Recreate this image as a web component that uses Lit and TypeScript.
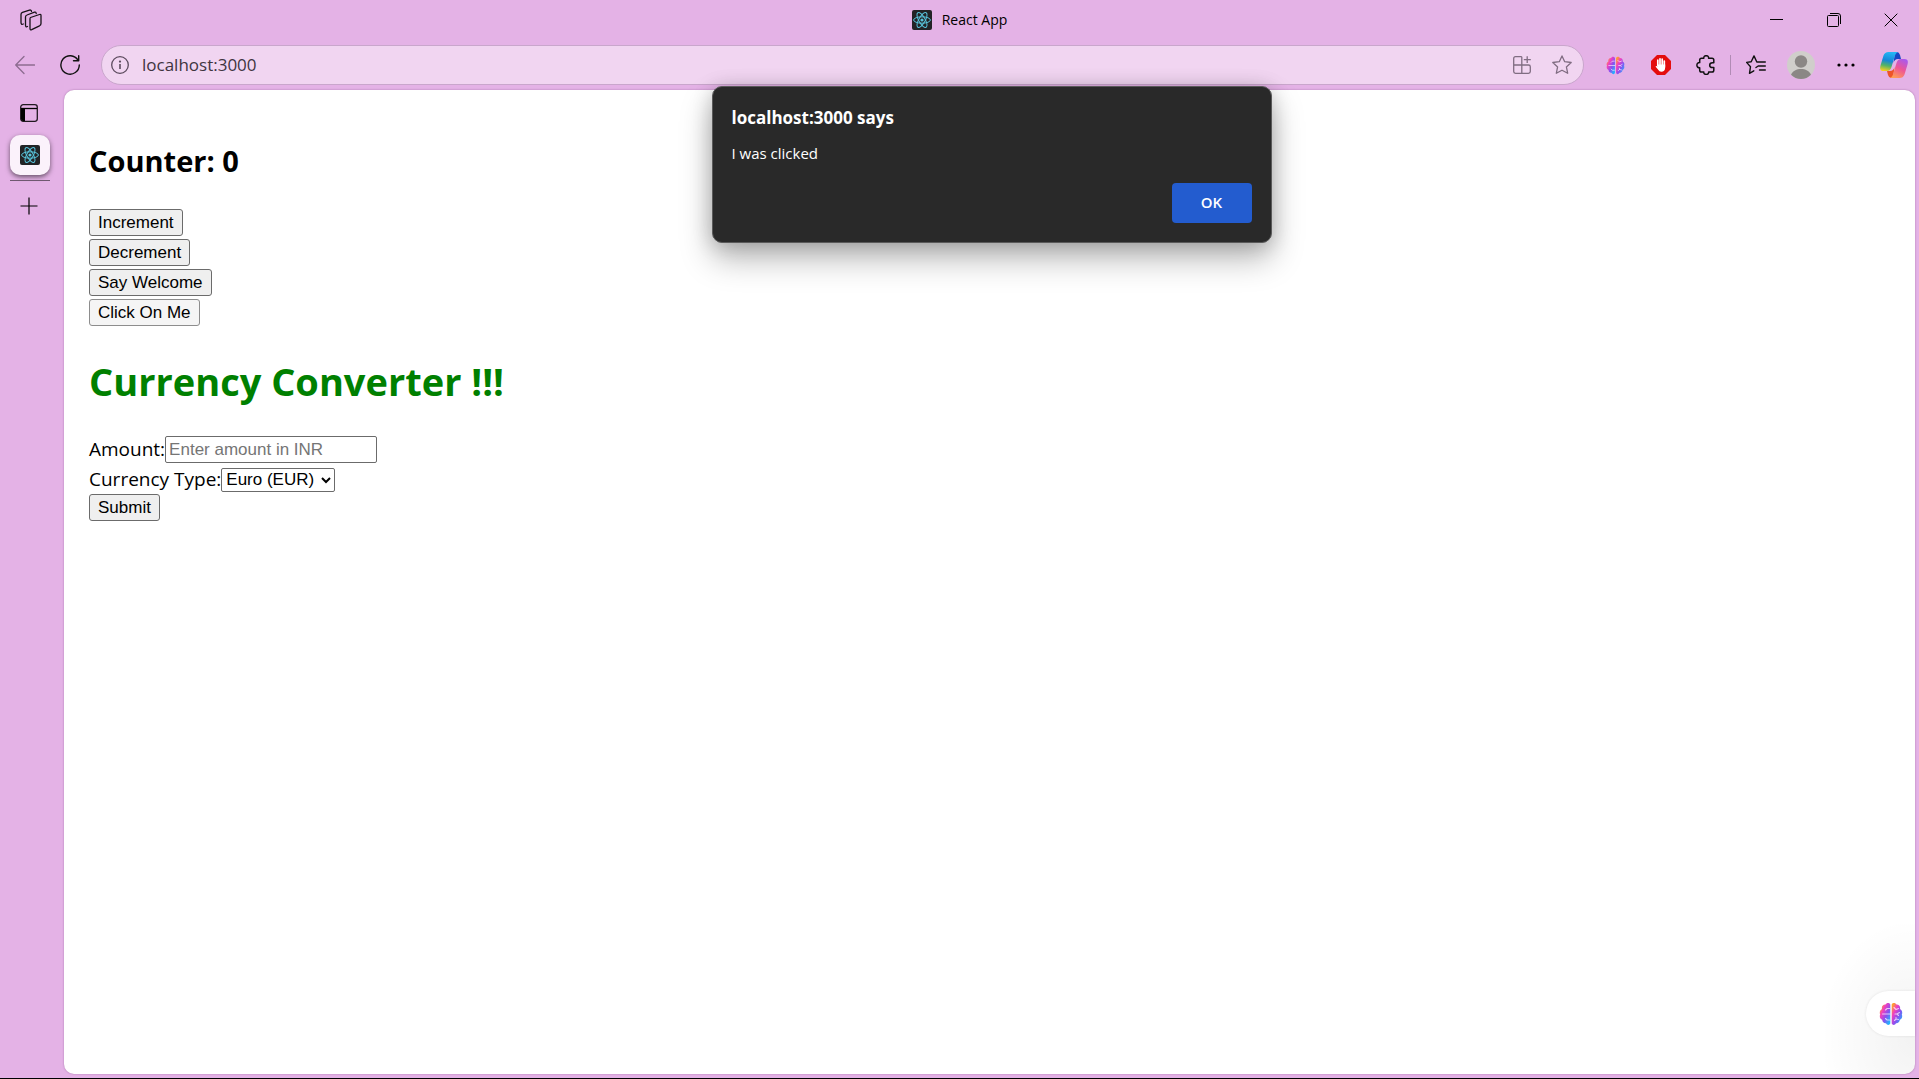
import { LitElement, html, svg, css } from "lit";
import { customElement, state } from "lit/decorators.js";

const reactLogo = html`<svg viewBox="0 0 20 20" width="20" height="20" aria-hidden="true">
  <rect width="20" height="20" rx="2" fill="#222326" />
  <g fill="none" stroke="#58c4dc" stroke-width="1">
    <ellipse cx="10" cy="10" rx="8.4" ry="3.2" />
    <ellipse cx="10" cy="10" rx="8.4" ry="3.2" transform="rotate(60 10 10)" />
    <ellipse cx="10" cy="10" rx="8.4" ry="3.2" transform="rotate(120 10 10)" />
  </g>
  <circle cx="10" cy="10" r="1.6" fill="#58c4dc" />
</svg>`;

const brain = (id: string, size: number) => html`<svg viewBox="0 0 24 24" width=${size} height=${size} aria-hidden="true">
  <defs>
    <linearGradient id=${id} x1="0" y1="0" x2="1" y2="1">
      <stop offset=".1" stop-color="#ffa02e" />
      <stop offset=".33" stop-color="#f13fc0" />
      <stop offset=".6" stop-color="#8a50f0" />
      <stop offset=".9" stop-color="#20b4ff" />
    </linearGradient>
  </defs>
  ${svg`<g fill=${`url(#${id})`}>
    <path d="M11.3 2.4C10.3.4 7.300.6 6.500 2.600 3.900 2.500 2.300 4.800 3 7 1 8 .2 10.500 1.200 12.400.2 14.500 1.200 17 3.200 17.800 3.300 20.300 5.300 21.600 7 21.300 8 23.500 10.600 23.500 11.300 21.600Z" />
    <path d="M12.700 2.400C13.700.4 16.700.6 17.500 2.600 20.100 2.500 21.700 4.800 21 7 23 8 23.800 10.500 22.800 12.400 23.800 14.500 22.800 17 20.800 17.800 20.700 20.300 18.700 21.600 17 21.300 16 23.500 13.400 23.500 12.700 21.600Z" />
  </g>`}
  <g fill="none" stroke="#fff" stroke-opacity=".7" stroke-width="1.100" stroke-linecap="round">
    <path d="M10.500 6.500H8L6.500 8M3.500 12H11M10.500 18H8L6.500 16.500M15 5.500L17 7.500 19.500 6.500M16 12H18L20.500 10.500M18 12L19.500 13.500M15.500 18.500L17 17 19.500 17.500M17 17V15.500" />
  </g>
</svg>`;

const line = (d: string, size = 20, width = 1.3) => html`<svg
  viewBox="0 0 20 20" width=${size} height=${size} fill="none" stroke="currentColor"
  stroke-width=${width} stroke-linecap="round" stroke-linejoin="round" aria-hidden="true"
><path d=${d} /></svg>`;

const star = "M10 .9L12.700 6.700 19.200 7.500 14.400 11.900 15.700 18.300 10 15.200 4.300 18.300 5.600 11.900.8 7.500 7.300 6.700Z";

@customElement("app-root")
export class AppRoot extends LitElement {
  @state() private count = 0;
  @state() private message = "I was clicked";

  static styles = css`
    :host {
      display: flex;
      flex-direction: column;
      min-height: 100vh;
      box-sizing: border-box;
      background: #e4b2e6;
      border-bottom: 1px solid #000;
      font-family: "Segoe UI", "Open Sans", sans-serif;
      color: #000;
    }
    * { box-sizing: border-box; }
    svg { display: block; flex: none; }
    .icon-button {
      display: flex;
      align-items: center;
      justify-content: center;
      width: 45px;
      height: 40px;
      padding: 0;
      border: 0;
      background: none;
      color: #111;
    }
    .titlebar {
      display: grid;
      grid-template-columns: 1fr auto 1fr;
      align-items: center;
      height: 40px;
    }
    .workspaces { margin-left: 8px; }
    .window-title {
      display: flex;
      align-items: center;
      gap: 10px;
      font-size: 14px;
      line-height: 20px;
    }
    .window-controls { display: flex; justify-content: flex-end; }
    .window-controls .icon-button { width: 57px; }
    .toolbar {
      display: flex;
      align-items: center;
      height: 50px;
      padding: 0 3px 0 2px;
    }
    .muted { color: #8d6c90; }
    .address {
      display: flex;
      flex: 1;
      align-items: center;
      height: 40px;
      margin: 0 9px;
      padding: 0 11px 0 8px;
      border: 1px solid #c9a6cc;
      border-radius: 20px;
      background: #f1d5f1;
      color: #5c4b5e;
    }
    .url {
      flex: 1;
      min-width: 0;
      margin-left: 12px;
      padding: 0;
      border: 0;
      outline: 0;
      background: none;
      color: #40343f;
      font: 17px/24px "Segoe UI", "Open Sans", sans-serif;
    }
    .address .icon-button { width: 40px; height: 36px; color: #806d82; }
    .address .info { width: 20px; color: #5c4b5e; }
    .address .favourite { width: 20px; margin-left: 10px; }
    .separator { width: 1px; height: 20px; margin: 0 2px; background: #b18bb5; }
    .copilot { margin-left: 3px; }
    .workspace { position: relative; display: flex; flex: 1; }
    .sidebar {
      display: flex;
      flex-direction: column;
      align-items: center;
      width: 64px;
      padding: 3px 6px 0 0;
    }
    .tab-menu { height: 40px; }
    .tab {
      display: flex;
      align-items: center;
      justify-content: center;
      width: 40px;
      height: 40px;
      margin: 2px 0 5px 2px;
      padding: 0;
      border: 0;
      border-radius: 10px;
      background: #fbf2fb;
      box-shadow: 0 2px 5px #0000008c;
    }
    .rule { width: 40px; height: 1px; margin: 0 0 5px 2px; background: #6f5870; }
    .stage { position: relative; display: flex; flex: 1; padding: 0 4px 4px 0; }
    .page {
      flex: 1;
      padding: 52px 25px 25px;
      border-radius: 10px;
      background: #fff;
      box-shadow: 0 0 2px #7c4b8099;
      font-size: 19px;
      line-height: 27px;
    }
    .counter { margin: 0 0 29px; font-size: 29px; line-height: 38px; font-weight: 700; }
    .actions { display: flex; flex-direction: column; align-items: flex-start; gap: 3px; }
    .page-button {
      height: 27px;
      padding: 0 8px;
      border: 1px solid #6b6b6b;
      border-radius: 3px;
      background: #efefef;
      color: #000;
      font: 17px/20px "Liberation Sans", Arial, sans-serif;
    }
    .active { border-color: #8d8d8d; background: #f5f5f5; }
    .heading { margin: 28px 0; color: #008000; font-size: 38px; line-height: 54px; font-weight: 700; }
    .converter { display: flex; flex-direction: column; align-items: flex-start; }
    .field { display: flex; align-items: center; }
    .amount, .currency {
      border: 1px solid #6b6b6b;
      border-radius: 2px;
      background: #fff;
      color: #000;
      font: 17px/20px "Liberation Sans", Arial, sans-serif;
    }
    .amount { width: 212px; height: 27px; padding: 1px 3px; }
    .amount::placeholder { color: #757575; }
    .currency { width: 114px; height: 24px; padding: 0; }
    .type { margin: 3px 0 1px; }
    .dialog {
      position: absolute;
      top: -4px;
      left: 50%;
      transform: translateX(-50%);
      display: flex;
      flex-direction: column;
      width: 560px;
      margin: 0;
      padding: 19px 19px 19px;
      border: 1px solid #5a5a5a;
      border-radius: 10px;
      background: #292929;
      color: #fff;
      box-shadow: 0 16px 32px #00000047, 0 2px 20px #00000030;
    }
    .dialog-title { margin: 0 0 11px; font-size: 17px; line-height: 24px; font-weight: 700; }
    .dialog-text { margin: 0 0 18px; font-size: 15px; line-height: 24px; }
    .ok {
      align-self: flex-end;
      width: 80px;
      height: 40px;
      padding: 0 0 2px;
      border: 0;
      border-radius: 4px;
      background: #235ccf;
      color: #fff;
      font: 600 15px/20px "Segoe UI", "Open Sans", sans-serif;
    }
    .assistant {
      position: absolute;
      right: 4px;
      bottom: 42px;
      display: flex;
      align-items: center;
      width: 49px;
      height: 45px;
      padding: 0 0 0 13px;
      border: 0;
      border-radius: 23px 0 0 23px;
      background: #fff;
      box-shadow: 0 0 3px #00000018;
    }
    .glow {
      position: absolute;
      right: 4px;
      bottom: 4px;
      width: 90px;
      height: 150px;
      border-radius: 0 0 10px 0;
      background: radial-gradient(ellipse at 100% 75%, #0000000d, #00000000 75%);
      pointer-events: none;
    }
  `;

  private titlebar() {
    return html`<header class="titlebar">
      <button class="icon-button workspaces" aria-label="Workspaces">
        <svg viewBox="0 0 22 22" width="22" height="22" fill="none" stroke="#171217" stroke-width="1.300" stroke-linejoin="round" stroke-linecap="round" aria-hidden="true">
          <path d="M10.500 8.500L19.500 5.500Q21 5 21 6.500V14.500Q21 16 19.500 16.800L11.700 20.700Q10 21.400 10 19.500V10Q10 8.700 10.500 8.500Z" />
          <path d="M7.500 17.500Q5.500 18.500 5.500 16V8Q5.500 6.500 7 6L14.500 3.200Q16 2.700 16.200 4.500" />
          <path d="M3.300 15Q1 16 1 13.500V5.500Q1 4 2.500 3.400L9.500 1.100Q11.200.7 11.500 2.300" />
        </svg>
      </button>
      <div class="window-title">${reactLogo}<span>React App</span></div>
      <div class="window-controls">
        <button class="icon-button" aria-label="Minimize">
          <svg viewBox="0 0 14 14" width="14" height="14" stroke="#000" aria-hidden="true"><path d="M0 6.500H13" /></svg>
        </button>
        <button class="icon-button" aria-label="Restore">
          <svg viewBox="0 0 14 14" width="14" height="14" fill="none" stroke="#000" aria-hidden="true">
            <rect x=".5" y="2.500" width="11" height="11" rx="1" /><path d="M3 .5H11Q13.500.5 13.500 3V11" />
          </svg>
        </button>
        <button class="icon-button" aria-label="Close">
          <svg viewBox="0 0 14 14" width="14" height="14" stroke="#000" aria-hidden="true"><path d="M.7.7L13.300 13.300M13.300.7L.7 13.300" /></svg>
        </button>
      </div>
    </header>`;
  }

  private toolbar() {
    return html`<nav class="toolbar" aria-label="Browser">
      <button class="icon-button muted" aria-label="Back">${line("M19.500 10H.7M9 1.500L.7 10 9 18.500")}</button>
      <button class="icon-button" aria-label="Reload">${line("M18 5.200A9.200 9.200 0 1 0 19.300 10M18.700.8V5.700H13.500", 20, 1.4)}</button>
      <div class="address">
        <button class="icon-button info" aria-label="Site information">
          <svg viewBox="0 0 18 18" width="18" height="18" fill="none" stroke="currentColor" stroke-width="1.300" aria-hidden="true">
            <circle cx="9" cy="9" r="8.300" /><path d="M9 8V13" stroke-width="1.600" /><circle cx="9" cy="5.600" r=".5" />
          </svg>
        </button>
        <input class="url" type="text" aria-label="Address" .value=${"localhost:3000"} />
        <button class="icon-button" aria-label="Install app">
          <svg viewBox="0 0 18 18" width="18" height="18" fill="none" stroke="currentColor" stroke-width="1.300" aria-hidden="true">
            <path d="M8.800.7H2.500Q.7.7.7 2.500V15.500Q.7 17.300 2.500 17.300H15.500Q17.300 17.300 17.300 15.500V10.800Q17.300 9 15.500 9H.7M8.800.7V17.300M14.200.2V7M10.800 3.600H17.800" />
          </svg>
        </button>
        <button class="icon-button favourite" aria-label="Add to favourites">${line(star)}</button>
      </div>
      <button class="icon-button" aria-label="Assistant extension">${brain("brain-small", 19)}</button>
      <button class="icon-button" aria-label="Ad blocker">
        <svg viewBox="0 0 20 20" width="20" height="20" aria-hidden="true">
          <path d="M6 0H14L20 6V14L14 20H6L0 14V6Z" fill="#e40d0d" />
          <path d="M6.800 5.200V10.800M9 3.800V10M11.200 4.200V10M13.300 6V12" stroke="#fff" stroke-width="1.700" stroke-linecap="round" />
          <path d="M6 9.500H14.200V12.500Q14 16.800 10.200 16.800 8.200 16.800 7.200 14.800L4.500 11.500Q5.500 10.500 7 12Z" fill="#fff" />
        </svg>
      </button>
      <button class="icon-button" aria-label="Extensions">
        ${line("M5.500 3.200H7.800C7.600 1.500 8.800.7 10.200.7S12.800 1.500 12.600 3.200H16Q17.800 3.200 17.800 5V7.800H16.500C14.500 7.800 13.700 8.800 13.700 10.200S14.500 12.600 16.500 12.600H17.800V15.300Q17.800 17.100 16 17.100H12.600C12.800 18.700 11.600 19.400 10.200 19.400S7.600 18.700 7.800 17.100H5.500Q3.700 17.100 3.700 15.300V12.800C2 13 .9 11.700.9 10.200S2 7.400 3.700 7.600V5Q3.700 3.200 5.500 3.200Z", 20, 1.5)}
      </button>
      <span class="separator"></span>
      <button class="icon-button" aria-label="Favourites">
        ${line("M13 7H10.800L8 .9 5.200 6.700.6 7.400 4.500 11.700 3.500 18.300 7.800 15.800M13.500 7H19.300M12.200 11H19.300M13.500 15H19.300M12.200 11 10 12.500", 20, 1.4)}
      </button>
      <button class="icon-button" aria-label="Profile">
        <svg viewBox="0 0 28 28" width="28" height="28" aria-hidden="true">
          <circle cx="14" cy="14" r="14" fill="#d0cecb" />
          <circle cx="14" cy="10.500" r="6.200" fill="#8b8785" />
          <path d="M4 23.700C7 16 21 16 24 23.700A14 14 0 0 1 4 23.700Z" fill="#8b8785" />
        </svg>
      </button>
      <button class="icon-button" aria-label="Settings and more">
        <svg viewBox="0 0 18 4" width="18" height="4" aria-hidden="true"><circle cx="2" cy="2" r="1.600" /><circle cx="9" cy="2" r="1.600" /><circle cx="16" cy="2" r="1.600" /></svg>
      </button>
      <button class="icon-button copilot" aria-label="Copilot">
        <svg viewBox="0 0 28 28" width="28" height="28" aria-hidden="true">
          <defs>
            <linearGradient id="cp-a" x1=".5" y1="0" x2=".3" y2="1"><stop offset="0" stop-color="#24b7f4" /><stop offset=".45" stop-color="#1687d8" /><stop offset=".72" stop-color="#55b365" /><stop offset="1" stop-color="#f5ce20" /></linearGradient>
            <linearGradient id="cp-b" x1=".8" y1="0" x2=".3" y2="1"><stop offset="0" stop-color="#a75af0" /><stop offset=".5" stop-color="#ee5596" /><stop offset="1" stop-color="#ff9c55" /></linearGradient>
          </defs>
          <path d="M15 1H17Q19 1 20 4L21 8H18Q14.500 8 13.500 12Z" fill="#1747c4" />
          <path d="M13 27H11Q9 27 8 24L7 20H10Q13.500 20 14.500 16Z" fill="#ee5429" />
          <path d="M8.500 1H18Q15.500 2 14.500 6L11.500 16Q10.300 20 7 20H3.500Q-1 20 .5 14.500L3.500 4.500Q4.800 1 8.500 1Z" fill="url(#cp-a)" />
          <path d="M19.500 27H10Q12.500 26 13.500 22L16.500 12Q17.700 8 21 8H24.500Q29 8 27.500 13.500L24.500 23.500Q23.200 27 19.500 27Z" fill="url(#cp-b)" />
        </svg>
      </button>
    </nav>`;
  }

  private page() {
    return html`<main class="page">
      <h2 class="counter">Counter: ${this.count}</h2>
      <div class="actions">
        <button class="page-button" @click=${() => this.count++}>Increment</button>
        <button class="page-button" @click=${() => this.count--}>Decrement</button>
        <button class="page-button" @click=${() => (this.message = "Welcome")}>Say Welcome</button>
        <button class="page-button active" @click=${() => (this.message = "I was clicked")}>Click On Me</button>
      </div>
      <h1 class="heading">Currency Converter !!!</h1>
      <form class="converter" @submit=${(e: Event) => e.preventDefault()}>
        <div class="field">
          <label for="amount">Amount:</label>
          <input class="amount" id="amount" type="text" placeholder="Enter amount in INR" />
        </div>
        <div class="field type">
          <label for="currency">Currency Type:</label>
          <select class="currency" id="currency"><option>Euro (EUR)</option></select>
        </div>
        <button class="page-button" type="submit">Submit</button>
      </form>
    </main>`;
  }

  render() {
    return html`
      ${this.titlebar()} ${this.toolbar()}
      <div class="workspace">
        <aside class="sidebar">
          <button class="icon-button tab-menu" aria-label="Tab actions">
            <svg viewBox="0 0 18 18" width="18" height="18" aria-hidden="true">
              <rect x=".7" y=".7" width="16.600" height="16.600" rx="2.500" fill="none" stroke="#201820" stroke-width="1.300" />
              <path d="M1 4.500H5V17H3Q1 17 1 15Z" /><path d="M1 4.500H17" stroke="#000" stroke-width="1.300" />
            </svg>
          </button>
          <button class="tab" aria-label="React App">${reactLogo}</button>
          <div class="rule"></div>
          <button class="icon-button" aria-label="New tab">
            <svg viewBox="0 0 18 18" width="18" height="18" stroke="#000" stroke-width="1.200" aria-hidden="true"><path d="M9 .5V17.500M.5 9H17.500" /></svg>
          </button>
        </aside>
        <div class="stage">
          ${this.page()}
          <div class="glow"></div>
          <button class="assistant" aria-label="Open assistant">${brain("brain-large", 24)}</button>
          ${this.message
            ? html`<section class="dialog" role="alertdialog" aria-labelledby="says" aria-describedby="message">
                <h2 class="dialog-title" id="says">localhost:3000 says</h2>
                <p class="dialog-text" id="message">${this.message}</p>
                <button class="ok" @click=${() => (this.message = "")}>OK</button>
              </section>`
            : null}
        </div>
      </div>
    `;
  }
}
